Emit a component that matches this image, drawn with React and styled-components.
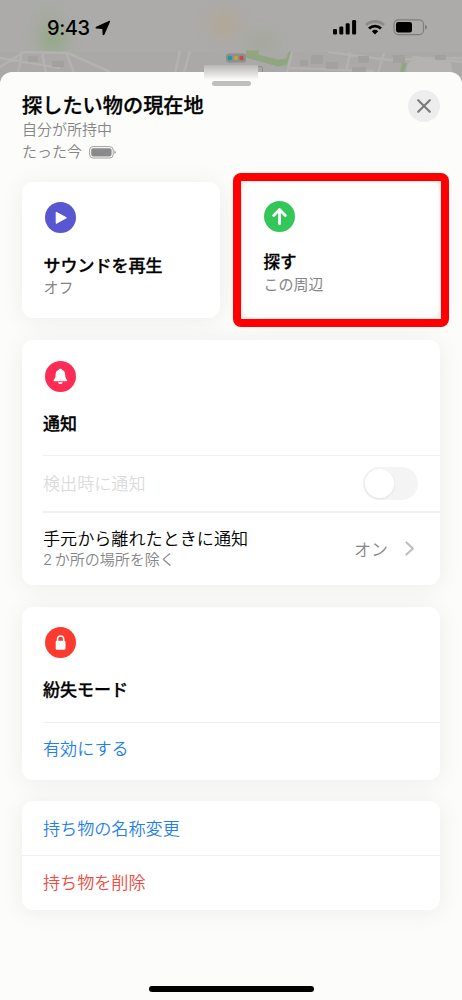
import styled, { createGlobalStyle } from "styled-components";

const App = () => {
  return (
    <Screen>
      <GlobalStyle />
      <MapHeader>
        <MapDrawing />
        <StatusBar>
          <Clock>
            9:43
            <LocationIcon />
          </Clock>
          <StatusIcons />
        </StatusBar>
      </MapHeader>
      <Sheet>
        <Tag />
        <Grabber />
        <SheetHeader>
          <div>
            <Title>探したい物の現在地</Title>
            <Subtitle>自分が所持中</Subtitle>
            <Subtitle>
              たった今
              <SmallBattery />
            </Subtitle>
          </div>
          <CloseButton aria-label="閉じる">
            <svg width="14" height="14" viewBox="0 0 14 14">
              <path
                d="M1.2 1.2 12.8 12.8M12.8 1.2 1.2 12.8"
                stroke="#7b7b7d"
                strokeWidth="2.1"
                strokeLinecap="round"
              />
            </svg>
          </CloseButton>
        </SheetHeader>

        <Actions>
          <ActionCard>
            <Badge $color="#5856d0">
              <svg width="31" height="31" viewBox="0 0 31 31">
                <path
                  d="M11.2 10.2v11.2L21.4 15.8z"
                  fill="#fff"
                  stroke="#fff"
                  strokeWidth="1"
                  strokeLinejoin="round"
                />
              </svg>
            </Badge>
            <CardTitle>サウンドを再生</CardTitle>
            <CardNote>オフ</CardNote>
          </ActionCard>
          <ActionCard $raised>
            <Badge $color="#33c759">
              <svg width="31" height="31" viewBox="0 0 31 31">
                <path
                  d="M15.5 22.8V9M9.7 14.4 15.5 8.6l5.8 5.8"
                  fill="none"
                  stroke="#fff"
                  strokeWidth="2.8"
                  strokeLinecap="round"
                  strokeLinejoin="round"
                />
              </svg>
            </Badge>
            <CardTitle $size={16.5}>探す</CardTitle>
            <CardNote>この周辺</CardNote>
            <Highlight />
          </ActionCard>
        </Actions>

        <Card>
          <CardHead>
            <Badge $color="#fc2c55">
              <svg width="31" height="31" viewBox="0 0 31 31">
                <path
                  d="M15.4 7.7c1.1 0 1.7.6 1.9 1.3 2 .6 2.9 2.4 2.9 4.6 0 3 .6 3.9 1.6 4.9.8.8.5 1.7-.5 1.7H9.5c-1 0-1.3-.9-.5-1.7 1-1 1.6-1.9 1.6-4.9 0-2.2.9-4 2.9-4.6.2-.7.8-1.3 1.9-1.3z"
                  fill="#fff"
                />
                <path d="M13 21.2h4.8c-.2 1.1-1.2 1.8-2.4 1.8s-2.2-.7-2.4-1.8z" fill="#fff" />
              </svg>
            </Badge>
            <CardTitle>通知</CardTitle>
          </CardHead>
          <Row $height={56}>
            <RowLabel $color="#dcdcdd">検出時に通知</RowLabel>
            <Switch>
              <Knob />
            </Switch>
          </Row>
          <Row $height={74} $line={2}>
            <div>
              <RowLabel>手元から離れたときに通知</RowLabel>
              <RowNote>
                <Count>2</Count>か所の場所を除く
              </RowNote>
            </div>
            <RowValue>
              オン
              <svg width="10" height="15" viewBox="0 0 10 15">
                <path
                  d="M1.4 1.4 8 7.5 1.4 13.6"
                  fill="none"
                  stroke="#bdbdbf"
                  strokeWidth="2"
                  strokeLinecap="round"
                  strokeLinejoin="round"
                />
              </svg>
            </RowValue>
          </Row>
        </Card>

        <Card>
          <CardHead $top={20}>
            <Badge $color="#fc3b30">
              <svg width="31" height="31" viewBox="0 0 31 31">
                <rect x="10.7" y="13.8" width="9.8" height="8.9" rx="1.3" fill="#fff" />
                <path
                  d="M12.5 14.5v-2.3a3.1 3.1 0 0 1 6.2 0v2.3"
                  fill="none"
                  stroke="#fff"
                  strokeWidth="1.5"
                />
              </svg>
            </Badge>
            <CardTitle>紛失モード</CardTitle>
          </CardHead>
          <Row $height={58}>
            <RowLabel $color="#1f7fee" $lift={6}>
              有効にする
            </RowLabel>
          </Row>
        </Card>

        <Card $gap={21}>
          <LinkRow $color="#1f7fee">持ち物の名称変更</LinkRow>
          <LinkRow $color="#ef4a40">持ち物を削除</LinkRow>
        </Card>
        <HomeIndicator />
      </Sheet>
    </Screen>
  );
};

const LocationIcon = () => (
  <svg width="16" height="16" viewBox="0 0 16 16">
    <path
      d="M14.6 1.3 8.9 14.2q-.4.8-.7 0L7.9 8.3 1.5 8q-.8-.3 0-.7z"
      fill="#000"
      stroke="#000"
      strokeWidth="1.2"
      strokeLinejoin="round"
    />
  </svg>
);

const StatusIcons = () => (
  <svg width="96" height="18" viewBox="0 0 96 18">
    <rect x="1" y="11" width="4" height="5.5" rx="1.2" />
    <rect x="7.3" y="8.5" width="4" height="8" rx="1.2" />
    <rect x="13.7" y="5.3" width="4" height="11.2" rx="1.2" />
    <rect x="20.1" y="2" width="4" height="14.5" rx="1.2" />
    <g fill="none" strokeWidth="2.8">
      <path d="M34 7.1a13 13 0 0 1 18 0" stroke="#8b8b89" />
      <path d="M37 10.6a8.6 8.6 0 0 1 12 0" stroke="#000" />
    </g>
    <path d="M39.8 13.2a4.8 4.8 0 0 1 6.400 0L43 16.5z" />
    <rect x="62" y="1.9" width="29.5" height="14.7" rx="4.3" fill="none" stroke="#7d7d7b" strokeWidth="1.1" />
    <rect x="64" y="3.9" width="16" height="10.7" rx="2.3" />
    <path d="M93 6.8q2 .7 2 2.4t-2 2.4z" fill="#7d7d7b" />
  </svg>
);

const SmallBattery = () => (
  <svg width="27" height="13" viewBox="0 0 27 13">
    <rect x=".6" y=".6" width="23.6" height="11.4" rx="3.4" fill="none" stroke="#a0a0a2" strokeWidth="1" />
    <rect x="2.2" y="2.2" width="20.4" height="8.2" rx="1.8" fill="#8a8a8c" />
    <path d="M25.3 4.5q1.4.6 1.4 1.8t-1.4 1.8z" fill="#a0a0a2" />
  </svg>
);

const MapDrawing = () => (
  <MapSvg width="462" height="90" viewBox="0 0 462 90">
    <defs>
      <filter id="soft" x="-80%" y="-80%" width="260%" height="260%" colorInterpolationFilters="sRGB">
        <feGaussianBlur stdDeviation="8" />
      </filter>
      <filter id="slight" colorInterpolationFilters="sRGB">
        <feGaussianBlur stdDeviation=".6" />
      </filter>
    </defs>
    <rect width="462" height="90" fill="#acaba9" />
    <g filter="url(#soft)">
      <ellipse cx="53" cy="39" rx="14" ry="14" fill="#93a886" />
      <ellipse cx="48" cy="15" rx="15" ry="9" fill="#a5ab9f" />
      <ellipse cx="224" cy="24" rx="13" ry="12" fill="#b3a692" />
      <ellipse cx="262" cy="42" rx="18" ry="7" fill="#a3a898" />
    </g>
    <g filter="url(#slight)">
      <rect x="-5" y="52" width="472" height="40" fill="#aaa9a7" />
      <g fill="none" stroke="#b3b2b0" strokeWidth="2.6">
        <path d="M0 67 24 52 68 53 110 72M22 51 18 73M42 52l4 21M66 52l8 21M0 58l60 10M175 73l5-22M184 73l6-22M292 52l-5 21M350 52l-4 21M384 53l-6 20M328 52l60 8 74-2M290 68l84 3M412 57l50 5" />
      </g>
      <g fill="#a3a19f">
        <path d="M300 60h8v6h-8zM311 55h12v9h-12zM326 62h12v7h-12zM358 56h11v7h-11zM393 55h12v8h-12zM435 55h11v5h-11zM352 67h14v5h-14zM28 56h10v6H28zM52 61h12v6H52z" />
      </g>
      <path d="M246 50.5h13l-1 4 20 5 8-1 3-7h2l-4 13-9 2-32-9z" fill="#8fa680" />
      <path d="M402 63h5l-3 9h-4z" fill="#8fa680" />
    </g>
    <rect x="407" y="60" width="45" height="30" rx="8" fill="#b4b3b1" />
    <rect x="226" y="53.5" width="20" height="9" rx="3" fill="#8e8e90" />
    <circle cx="230" cy="58" r="2.3" fill="#1a9b9b" />
    <circle cx="236" cy="58" r="2.2" fill="#c5a32e" />
    <circle cx="241.5" cy="58" r="2.2" fill="#c9484c" />
    <rect x="254" y="66.5" width="8.5" height="8" rx="2" fill="none" stroke="#8c8b89" />
  </MapSvg>
);

const GlobalStyle = createGlobalStyle`
  * {
    box-sizing: border-box;
  }
  body {
    margin: 0;
    background: #fcfcfa;
  }
  svg {
    display: block;
    flex: none;
  }
`;

const Screen = styled.div`
  width: 462px;
  height: 1000px;
  overflow: hidden;
  font-family: "Inter", "Noto Sans CJK JP", sans-serif;
  color: #000;
`;

const MapHeader = styled.div`
  position: relative;
  height: 72px;
`;

const MapSvg = styled.svg`
  position: absolute;
  top: 0;
  left: 0;
`;

const StatusBar = styled.div`
  position: relative;
  display: flex;
  justify-content: space-between;
  align-items: center;
  height: 54px;
  padding: 0 34px 0 47px;
`;

const Clock = styled.div`
  display: flex;
  align-items: center;
  gap: 5px;
  padding-top: 1px;
  font-size: 20px;
  font-weight: 500;
  letter-spacing: -0.4px;
`;

const Sheet = styled.div`
  position: relative;
  height: 928px;
  padding: 9px 22px 0;
  border-radius: 12px 12px 0 0;
  background: #fcfcfa;
`;

const Tag = styled.div`
  position: absolute;
  top: -7px;
  left: 204px;
  width: 54px;
  height: 15px;
  background: linear-gradient(#b8b7b5, #fcfcfa);
  filter: blur(0.6px);
`;

const Grabber = styled.div`
  position: relative;
  width: 39px;
  height: 5px;
  margin: 0 auto;
  border-radius: 3px;
  background: #bfbfbf;
`;

const SheetHeader = styled.div`
  display: flex;
  justify-content: space-between;
  height: 96px;
  padding-top: 4px;
`;

const Title = styled.div`
  padding-top: 1px;
  font-size: 20.2px;
  font-weight: 500;
  line-height: 30px;
  margin-bottom: -2px;
  -webkit-text-stroke: 0.3px #000;
`;

const Subtitle = styled.div`
  display: flex;
  align-items: center;
  gap: 7px;
  font-size: 15px;
  font-weight: 350;
  line-height: 22px;
  color: #858587;
`;

const CloseButton = styled.button`
  display: flex;
  align-items: center;
  justify-content: center;
  width: 32px;
  height: 32px;
  padding: 0;
  border: 0;
  border-radius: 50%;
  background: #ededed;
`;

const Actions = styled.div`
  display: grid;
  grid-template-columns: 198px 198px;
  justify-content: space-between;
  height: 136px;
`;

const Card = styled.div`
  margin-top: ${(p) => p.$gap || 22}px;
  border-radius: 11px;
  background: #fff;
  box-shadow: 0 2px 24px rgba(0, 0, 0, 0.065);
`;

const Badge = styled.div`
  width: 31px;
  height: 31px;
  margin-left: 2px;
  border-radius: 50%;
  background: ${(p) => p.$color};
`;

const CardTitle = styled.div`
  margin-top: 20px;
  font-size: ${(p) => p.$size || 17}px;
  font-weight: 500;
  line-height: 25px;
  -webkit-text-stroke: 0.3px #000;
`;

const CardNote = styled.div`
  margin-top: -1px;
  font-size: 15px;
  font-weight: 400;
  line-height: 20px;
  color: #858587;
`;

const ActionCard = styled(Card)`
  position: relative;
  margin-top: 0;
  padding: ${(p) => (p.$raised ? "18.5px 0 0 21.5px" : "20px 0 0 21.5px")};

  ${Badge} {
    margin-left: ${(p) => (p.$raised ? 0 : 1.5)}px;
  }

  ${CardTitle} {
    margin-top: ${(p) => (p.$raised ? 18.5 : 21)}px;
  }

  ${CardNote} {
    margin-top: ${(p) => (p.$raised ? -0.5 : -1.5)}px;
  }
`;

const Highlight = styled.div`
  position: absolute;
  inset: -9px;
  border: 8px solid #fe0000;
  border-radius: 8px;
  box-shadow: inset 0 0 4px rgba(0, 0, 0, 0.12);
`;

const CardHead = styled.div`
  height: 115px;
  padding: ${(p) => p.$top || 21}px 0 0 21px;
`;

const Row = styled.div`
  display: flex;
  align-items: center;
  justify-content: space-between;
  height: ${(p) => p.$height}px;
  margin-left: 21px;
  padding-right: 22px;
  border-top: ${(p) => p.$line || 1}px solid #f0f0f0;
`;

const RowLabel = styled.div`
  padding-bottom: ${(p) => p.$lift || 0}px;
  font-size: 17.1px;
  font-weight: 350;
  line-height: 22px;
  color: ${(p) => p.$color || "#000"};
`;

const RowNote = styled.div`
  font-size: 15px;
  font-weight: 350;
  line-height: 20px;
  color: #858587;
`;

const Count = styled.span`
  margin-right: 2.5px;
`;

const RowValue = styled.div`
  display: flex;
  align-items: center;
  gap: 17px;
  padding: 0 3px 2px 0;
  font-size: 17px;
  font-weight: 350;
  color: #858587;
`;

const Switch = styled.div`
  width: 55px;
  height: 33px;
  padding: 2px;
  border-radius: 17px;
  background: #f4f4f4;
`;

const Knob = styled.div`
  width: 29px;
  height: 29px;
  border-radius: 50%;
  background: #fff;
  box-shadow: 0 1px 3px rgba(0, 0, 0, 0.08);
`;

const LinkRow = styled.div`
  height: 54px;
  padding-left: 21px;
  font-size: 17.1px;
  font-weight: 350;
  line-height: 55px;
  color: ${(p) => p.$color};

  & + & {
    height: 55px;
    line-height: 54px;
    border-top: 1px solid #f0f0f0;
  }
`;

const HomeIndicator = styled.div`
  width: 165px;
  height: 6px;
  margin: 76px auto 0;
  border-radius: 3px;
  background: #000;
`;

export default App;
